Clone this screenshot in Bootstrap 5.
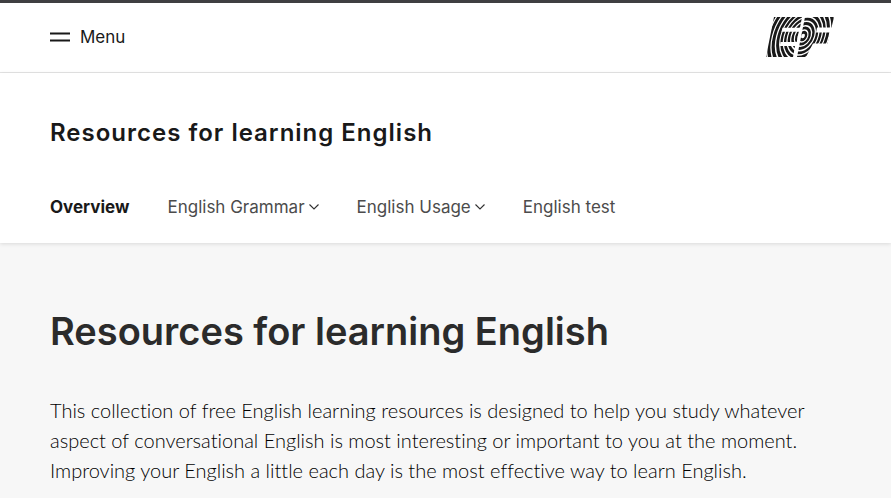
<!DOCTYPE html>
<html lang="en">
<head>
<meta charset="utf-8">
<meta name="viewport" content="width=device-width, initial-scale=1">
<title>Resources for learning English</title>
<link href="https://cdn.jsdelivr.net/npm/bootstrap@5.3.0/dist/css/bootstrap.min.css" rel="stylesheet">
<style>
body { font-family: "Inter", "Liberation Sans", sans-serif; color: #191919; background: #f7f7f7; }
.site-header { border-top: 3px solid #3f3f41; border-bottom: 1px solid #e5e5e5; padding-top: 14px; padding-bottom: 15px; }
.gutter { padding-left: 50px; padding-right: 57px; }
.menu-btn { font-size: 17px; line-height: 24px; gap: 10px; color: #191919; }
.site-title { font-size: 24px; line-height: 32px; font-weight: 600; letter-spacing: 1px; padding-top: 44px; }
.subnav { gap: 38px; padding-top: 46px; padding-bottom: 24px; font-size: 17px; line-height: 24px; }
.subnav a { color: #4c4c4c; gap: 4px; }
.subnav a.active { color: #191919; font-weight: 700; }
.section-head { box-shadow: 0 1px 4px rgba(0,0,0,.12); }
.intro { padding-top: 64px; }
.intro h1 { font-size: 38px; line-height: 48px; font-weight: 600; color: #2b2b2b; margin-bottom: 40px; }
.intro p { font-family: "Lato", sans-serif; font-size: 20px; line-height: 30px; font-weight: 300; color: #000; font-variant-ligatures: none; margin-bottom: 12px; }
</style>
</head>
<body>
<header class="site-header bg-white gutter d-flex align-items-center justify-content-between">
  <button type="button" class="menu-btn btn p-0 border-0 d-flex align-items-center">
    <svg width="20" height="10" viewBox="0 0 20 10" aria-hidden="true"><path d="M0 1.500h20M0 8.500h20" stroke="#191919" stroke-width="1.900"/></svg>
    Menu
  </button>
  <a href="#" class="d-flex" aria-label="EF home">
    <svg width="68" height="40" viewBox="0 0 68 40" aria-hidden="true">
      <defs>
        <clipPath id="ef"><path d="M8 0H36L34 10.700H16.500L15.500 14.700H32.800L30.700 25H14.500L13.800 29H29L27 40H0ZM39 0H68L65.500 10.500H51L50 15.500H64L61.500 26.500H47L40 40H31Z"/></clipPath>
      </defs>
      <g clip-path="url(#ef)">
        <g fill="none" stroke="#191919" stroke-width="2.300" transform="translate(37 19) skewX(-14) scale(1 1.250)">
          <circle r="3"/><circle r="6.500"/><circle r="10"/><circle r="13.500"/><circle r="17"/><circle r="20.500"/><circle r="24.200" stroke-width="2.800"/><circle r="28.400" stroke-width="3"/><circle r="32.600" stroke-width="3"/><circle r="36.800" stroke-width="3"/><circle r="41" stroke-width="3"/>
        </g>
      </g>
    </svg>
  </a>
</header>
<div class="section-head bg-white gutter">
  <div class="site-title">Resources for learning English</div>
  <nav class="subnav d-flex" aria-label="Section">
    <a href="#" class="active text-decoration-none" aria-current="page">Overview</a>
    <a href="#" class="text-decoration-none d-flex align-items-center">English Grammar
      <svg width="10" height="6" viewBox="0 0 10 6" aria-hidden="true"><path d="M.5.5 5 5 9.500.5" fill="none" stroke="#303030" stroke-width="1.100"/></svg></a>
    <a href="#" class="text-decoration-none d-flex align-items-center">English Usage
      <svg width="10" height="6" viewBox="0 0 10 6" aria-hidden="true"><path d="M.5.5 5 5 9.500.5" fill="none" stroke="#303030" stroke-width="1.100"/></svg></a>
    <a href="#" class="text-decoration-none">English test</a>
  </nav>
</div>
<main class="intro gutter">
  <h1>Resources for learning English</h1>
  <p>This collection of free English learning resources is designed to help you study whatever aspect of conversational English is most interesting or important to you at the moment. Improving your English a little each day is the most effective way to learn English.</p>
</main>
<script src="https://cdn.jsdelivr.net/npm/bootstrap@5.3.0/dist/js/bootstrap.bundle.min.js"></script>
</body>
</html>
